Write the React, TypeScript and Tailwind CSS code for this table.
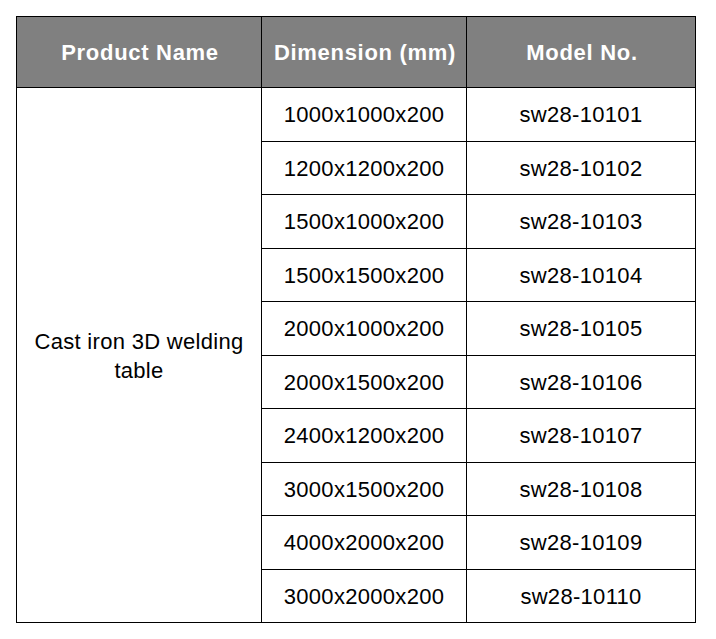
import React from 'react';

const rows = [
  { dim: '1000x1000x200', model: 'sw28-10101' },
  { dim: '1200x1200x200', model: 'sw28-10102' },
  { dim: '1500x1000x200', model: 'sw28-10103' },
  { dim: '1500x1500x200', model: 'sw28-10104' },
  { dim: '2000x1000x200', model: 'sw28-10105' },
  { dim: '2000x1500x200', model: 'sw28-10106' },
  { dim: '2400x1200x200', model: 'sw28-10107' },
  { dim: '3000x1500x200', model: 'sw28-10108' },
  { dim: '4000x2000x200', model: 'sw28-10109' },
  { dim: '3000x2000x200', model: 'sw28-10110' },
];

export default function App() {
  return (
    <div className="w-[716px] h-[639px] bg-white pt-[16px] pl-[16px] font-['Liberation_Sans',Arial,sans-serif]">
      <table className="border-collapse w-[679px] table-fixed text-black">
        <colgroup>
          <col className="w-[245px]" />
          <col className="w-[205px]" />
          <col className="w-[229px]" />
        </colgroup>
        <thead>
          <tr className="h-[71px] bg-[#808080] text-white">
            <th className="border border-black text-[22px] font-bold tracking-[0.7px] text-center align-middle p-0 pl-[2px]">
              Product Name
            </th>
            <th className="border border-black text-[22px] font-bold tracking-[0.7px] text-center align-middle p-0 pl-[2px]">
              Dimension (mm)
            </th>
            <th className="border border-black text-[22px] font-bold tracking-[0.7px] text-center align-middle p-0 pl-[2px]">
              Model No.
            </th>
          </tr>
        </thead>
        <tbody>
          {rows.map((r, i) => (
            <tr key={r.model} className="h-[53.5px]">
              {i === 0 && (
                <td
                  rowSpan={rows.length}
                  className="border border-black text-[22px] leading-[29px] tracking-[0.3px] text-center align-middle px-[14px] pt-[1px]"
                >
                  Cast iron 3D welding table
                </td>
              )}
              <td className="border border-black text-[22px] tracking-[0.3px] text-center align-middle p-0 pt-[1px]">
                {r.dim}
              </td>
              <td className="border border-black text-[22px] tracking-[0.3px] text-center align-middle p-0 pt-[1px]">
                {r.model}
              </td>
            </tr>
          ))}
        </tbody>
      </table>
    </div>
  );
}
